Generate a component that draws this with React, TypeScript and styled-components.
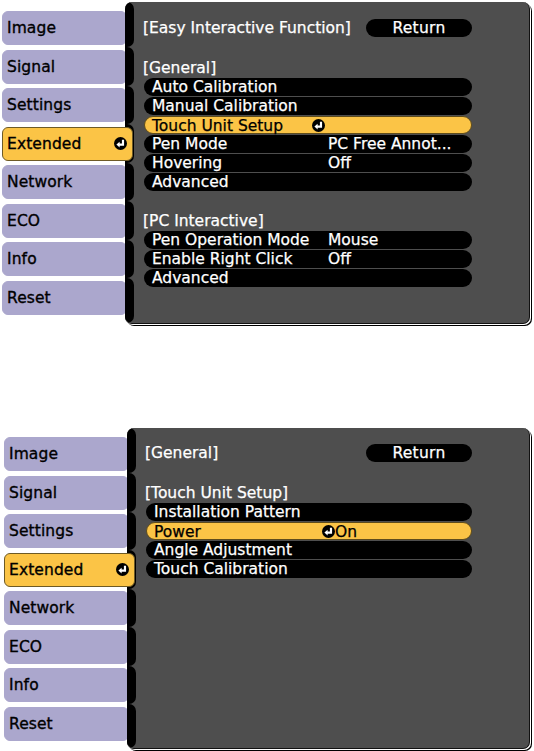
import React from "react";
import styled, { createGlobalStyle } from "styled-components";

const Global = createGlobalStyle`
  html, body { margin: 0; padding: 0; background: #ffffff; }
  * { box-sizing: border-box; }
`;

const LAVENDER = "#aba7cd";
const YELLOW = "#fbc446";
const PANEL = "#4e4e4e";

const Page = styled.div`
  width: 534px;
  height: 751px;
  background: #fff;
  display: flex;
  flex-direction: column;
  font-family: "DejaVu Sans", "Liberation Sans", sans-serif;
  font-size: 15.5px;
  overflow: hidden;
`;

const Screen = styled.div<{ $left: number; $top: number; $h: number }>`
  display: flex;
  align-items: flex-start;
  width: 530px;
  height: ${(p) => p.$h}px;
  margin-top: ${(p) => p.$top}px;
  padding-left: ${(p) => p.$left}px;
  flex-shrink: 0;
`;

const TabColumn = styled.div`
  width: 123px;
  flex-shrink: 0;
  display: flex;
  flex-direction: column;
  gap: 4.5px;
  padding-top: 9px;
`;

const Tab = styled.div<{ $active?: boolean }>`
  position: relative;
  z-index: ${(p) => (p.$active ? 2 : 0)};
  height: 34px;
  width: ${(p) => (p.$active ? 131 : 125)}px;
  display: flex;
  align-items: center;
  justify-content: space-between;
  padding: 0 5px 0 4px;
  background: ${(p) => (p.$active ? YELLOW : LAVENDER)};
  border-radius: 6px;
  border: 1px solid ${(p) => (p.$active ? "#6d5a26" : LAVENDER)};
  color: #000;
  -webkit-text-stroke: 0.35px #000;
  letter-spacing: 0.1px;
`;

const Panel = styled.div`
  position: relative;
  z-index: 1;
  flex: 1;
  height: 100%;
  display: flex;
  background: ${PANEL};
  border-radius: 7px;
  border-right: 1px solid #111;
  border-bottom: 1px solid #111;
  box-shadow: 1px 1px 0 #ffffff, 2px 2px 0 #000000;
  overflow: hidden;
`;

const BumpColumn = styled.div`
  width: 10px;
  flex-shrink: 0;
  display: flex;
  flex-direction: column;
  background: ${PANEL};
  border-left: 2px solid #000;
`;

const Bump = styled.div<{ $first?: boolean; $last?: boolean }>`
  height: ${(p) => (p.$first ? 45 : 38.5)}px;
  flex: ${(p) => (p.$last ? 1 : "none")};
  width: 7px;
  background: #000;
  border-radius: 0 8px 8px 0;
`;

const Content = styled.div<{ $top: number }>`
  flex: 1;
  display: flex;
  flex-direction: column;
  padding: ${(p) => p.$top}px 57px 0 8px;
  color: #fff;
  -webkit-text-stroke: 0.25px #fff;
`;

const HeaderRow = styled.div`
  display: flex;
  align-items: center;
  justify-content: space-between;
  height: 18px;
  white-space: nowrap;
`;

const ReturnPill = styled.div`
  width: 106px;
  height: 18px;
  border-radius: 9px;
  background: #000;
  display: flex;
  align-items: center;
  justify-content: center;
  letter-spacing: 0.3px;
`;

const Section = styled.div`
  margin-top: 20.5px;
  display: flex;
  flex-direction: column;
`;

const SectionLabel = styled.div`
  height: 20px;
  line-height: 20px;
  white-space: nowrap;
`;

const RowList = styled.div`
  display: flex;
  flex-direction: column;
  gap: 1px;
  margin-left: 1px;
`;

const Row = styled.div<{ $active?: boolean; $labelWidth: number }>`
  height: 18px;
  border-radius: 9px;
  background: ${(p) => (p.$active ? YELLOW : "#000")};
  border: ${(p) => (p.$active ? "1px solid #5e4c1c" : "none")};
  color: ${(p) => (p.$active ? "#000" : "#fff")};
  -webkit-text-stroke: 0.25px ${(p) => (p.$active ? "#000" : "#fff")};
  display: grid;
  grid-template-columns: ${(p) => p.$labelWidth}px 1fr;
  align-items: center;
  padding-left: ${(p) => (p.$active ? 7 : 8)}px;
  line-height: 18px;
  white-space: nowrap;
`;

const LabelCell = styled.div`
  display: flex;
  align-items: center;
  justify-content: space-between;
  padding-right: 3px;
`;

const ValueCell = styled.div`
  display: flex;
  align-items: center;
`;

const EnterSvg = styled.svg`
  width: 13px;
  height: 13px;
  flex-shrink: 0;
  display: block;
`;

const EnterIcon = () => (
  <EnterSvg viewBox="0 0 12 12">
    <circle cx="6" cy="6" r="6" fill="#000" />
    <path d="M8.3 2.6 V7 H4.6" stroke="#fff" strokeWidth="2" fill="none" />
    <path d="M2.2 7 L5.2 4.3 L5.2 9.7 Z" fill="#fff" />
  </EnterSvg>
);

const TABS = ["Image", "Signal", "Settings", "Extended", "Network", "ECO", "Info", "Reset"];

type RowData = { label: string; value?: string; active?: boolean; iconInLabel?: boolean; iconInValue?: boolean };

const Tabs = () => (
  <TabColumn>
    {TABS.map((t) => (
      <Tab key={t} $active={t === "Extended"}>
        <span>{t}</span>
        {t === "Extended" && <EnterIcon />}
      </Tab>
    ))}
  </TabColumn>
);

const Bumps = () => (
  <BumpColumn>
    {TABS.map((t, i) => (
      <Bump key={t} $first={i === 0} $last={i === TABS.length - 1} />
    ))}
  </BumpColumn>
);

const Rows = ({ rows, labelWidth }: { rows: RowData[]; labelWidth: number }) => (
  <RowList>
    {rows.map((r) => (
      <Row key={r.label} $active={r.active} $labelWidth={labelWidth}>
        <LabelCell>
          <span>{r.label}</span>
          {r.iconInLabel && <EnterIcon />}
        </LabelCell>
        <ValueCell>
          {r.iconInValue && <EnterIcon />}
          {r.value && <span>{r.value}</span>}
        </ValueCell>
      </Row>
    ))}
  </RowList>
);

export default function App() {
  return (
    <Page>
      <Global />
      <Screen $left={2} $top={2} $h={322}>
        <Tabs />
        <Panel>
          <Bumps />
          <Content $top={17}>
            <HeaderRow>
              <span>[Easy Interactive Function]</span>
              <ReturnPill>Return</ReturnPill>
            </HeaderRow>
            <Section>
              <SectionLabel>[General]</SectionLabel>
              <Rows
                labelWidth={176}
                rows={[
                  { label: "Auto Calibration" },
                  { label: "Manual Calibration" },
                  { label: "Touch Unit Setup", active: true, iconInLabel: true },
                  { label: "Pen Mode", value: "PC Free Annot..." },
                  { label: "Hovering", value: "Off" },
                  { label: "Advanced" },
                ]}
              />
            </Section>
            <Section>
              <SectionLabel>[PC Interactive]</SectionLabel>
              <Rows
                labelWidth={176}
                rows={[
                  { label: "Pen Operation Mode", value: "Mouse" },
                  { label: "Enable Right Click", value: "Off" },
                  { label: "Advanced" },
                ]}
              />
            </Section>
          </Content>
        </Panel>
      </Screen>
      <Screen $left={4} $top={104} $h={321}>
        <Tabs />
        <Panel>
          <Bumps />
          <Content $top={16}>
            <HeaderRow>
              <span>[General]</span>
              <ReturnPill>Return</ReturnPill>
            </HeaderRow>
            <Section>
              <SectionLabel>[Touch Unit Setup]</SectionLabel>
              <Rows
                labelWidth={168}
                rows={[
                  { label: "Installation Pattern" },
                  { label: "Power", value: "On", active: true, iconInValue: true },
                  { label: "Angle Adjustment" },
                  { label: "Touch Calibration" },
                ]}
              />
            </Section>
          </Content>
        </Panel>
      </Screen>
    </Page>
  );
}
